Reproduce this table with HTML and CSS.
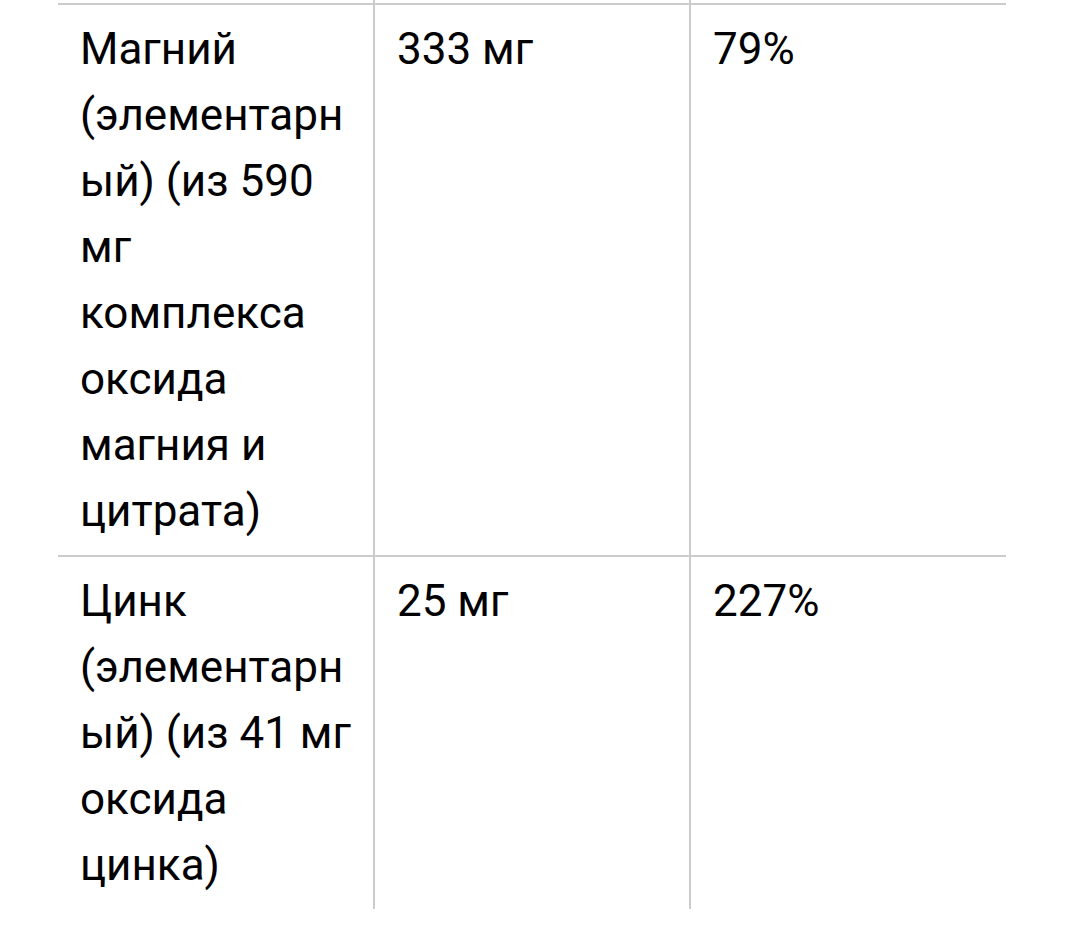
FILE: index.html
```html
<!DOCTYPE html>
<html lang="ru">
<head>
<meta charset="utf-8">
<title>Состав</title>
<link rel="stylesheet" href="styles.css">
</head>
<body>
<table class="facts">
  <colgroup><col class="c"><col class="c"><col class="c"></colgroup>
  <tbody>
    <tr class="spacer"><td></td><td></td><td></td></tr>
    <tr>
      <td>Магний (элементарный) (из 590 мг комплекса оксида магния и цитрата)</td>
      <td>333 мг</td>
      <td>79%</td>
    </tr>
    <tr>
      <td>Цинк (элементарный) (из 41 мг оксида цинка)</td>
      <td>25 мг</td>
      <td>227%</td>
    </tr>
  </tbody>
</table>
</body>
</html>
```
FILE: styles.css
```css
html, body {
  margin: 0;
  padding: 0;
  background: #fff;
}
body {
  font-family: Roboto, "Noto Sans", sans-serif;
  color: #000;
}
.facts {
  margin-left: 58px;
  width: 948px;
  border-collapse: collapse;
  table-layout: fixed;
  font-size: 44px;
  line-height: 66px;
}
.facts td {
  vertical-align: top;
  padding: 11px 20px 11px 22px;
  border-top: 2px solid #ccc;
  overflow-wrap: break-word;
  word-break: break-word;
}
.facts td + td {
  border-left: 2px solid #ccc;
}
.facts .spacer td {
  padding: 0;
  height: 3px;
  border-top: 0;
  line-height: 0;
  font-size: 0;
}
```
